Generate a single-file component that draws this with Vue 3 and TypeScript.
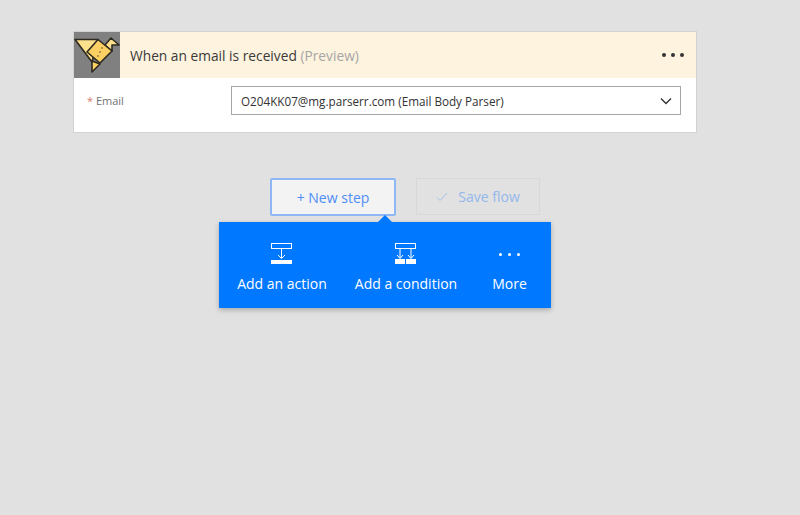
<script setup lang="ts">
const fieldLabel: string = 'Email'
</script>

<template>
  <main class="canvas">
    <section class="card">
      <header class="card-head">
        <div class="logo">
          <svg width="46" height="46" viewBox="0 0 46 46">
            <g stroke="#2e2a22" stroke-width="1.6" stroke-linejoin="round" fill="#fcd062">
              <path d="M1 7.5H24L18 30Z" fill="#fde08c" />
              <path d="M31 13L37 6L45 13H38V19Z" fill="#fde08c" />
              <path d="M18 29L26 32L18 40Z" />
              <path d="M24 7.5L38 19L26 31L13 20Z" />
            </g>
            <circle cx="28" cy="16" r="0.8" fill="#5a4a20" />
            <circle cx="26" cy="20" r="0.8" fill="#5a4a20" />
            <circle cx="24" cy="24" r="0.8" fill="#5a4a20" />
          </svg>
        </div>
        <div class="title">When an email is received <span class="preview">(Preview)</span></div>
        <div class="dots"><i></i><i></i><i></i></div>
      </header>
      <div class="field">
        <label class="label"><span class="req">*</span> {{ fieldLabel }}</label>
        <div class="select">
          <span>O204KK07@mg.parserr.com (Email Body Parser)</span>
          <svg width="12" height="8" viewBox="0 0 12 8"><path d="M1 1.5L6 6.5L11 1.5" fill="none" stroke="#333" stroke-width="1.4" /></svg>
        </div>
      </div>
    </section>

    <div class="actions">
      <button class="new-step">+ New step</button>
      <button class="save">
        <svg width="12" height="10" viewBox="0 0 12 10"><path d="M1 5.5L4 8.5L11 1" fill="none" stroke="#a3c1ec" stroke-width="1" /></svg>
        <span>Save flow</span>
      </button>
    </div>

    <div class="menu">
      <span class="caret"></span>
      <div class="item action">
        <svg width="24" height="22" viewBox="0 0 24 22">
          <g fill="none" stroke="#fff" stroke-width="1">
            <rect x="1.5" y="0.5" width="20" height="5" />
            <path d="M11.5 6V15M8 12L11.5 15.5L15 12" />
          </g>
          <rect x="1" y="17" width="21" height="4" fill="#fff" />
        </svg>
        <span>Add an action</span>
      </div>
      <div class="item condition">
        <svg width="24" height="22" viewBox="0 0 24 22">
          <g fill="none" stroke="#fff" stroke-width="1">
            <rect x="1.5" y="0.5" width="20" height="5" />
            <path d="M6 6V15M3 12L6 15.5L9 12M17 6V15M14 12L17 15.5L20 12" />
          </g>
          <rect x="1" y="16" width="10" height="5" fill="#fff" />
          <rect x="12" y="16" width="10" height="5" fill="#fff" />
        </svg>
        <span>Add a condition</span>
      </div>
      <div class="item more">
        <div class="more-dots"><i></i><i></i><i></i></div>
        <span>More</span>
      </div>
    </div>
  </main>
</template>

<style>
html, body { margin: 0; background: #e1e1e1; }
</style>

<style scoped>
.canvas {
  width: 770px;
  height: 515px;
  box-sizing: border-box;
  padding-top: 31px;
  display: flex;
  flex-direction: column;
  align-items: center;
  font-family: "Open Sans", "Noto Sans", sans-serif;
  background: #e1e1e1;
}
.card {
  width: 624px;
  height: 102px;
  box-sizing: border-box;
  background: #fff;
  border: 1px solid #d2d2d2;
}
.card-head {
  display: flex;
  align-items: center;
  height: 46px;
  background: #fdf3de;
}
.logo {
  width: 46px;
  height: 46px;
  background: #808080;
  flex: none;
}
.logo svg { display: block; }
.title {
  margin-left: 10px;
  font-size: 13.75px;
  color: #3b3a39;
  flex: 1;
  white-space: nowrap;
}
.preview { color: #a6a6a6; }
.dots {
  display: flex;
  gap: 5px;
  margin-right: 12px;
}
.dots i {
  width: 4px;
  height: 4px;
  border-radius: 50%;
  background: #333;
}
.field {
  display: flex;
  align-items: center;
  height: 29px;
  margin-top: 8px;
}
.label {
  width: 157px;
  box-sizing: border-box;
  padding-left: 13px;
  font-size: 11px;
  color: #737373;
}
.req { color: #d9776f; }
.select {
  width: 450px;
  height: 29px;
  box-sizing: border-box;
  border: 1px solid #a6a6a6;
  background: #fff;
  display: flex;
  align-items: center;
  justify-content: space-between;
  padding: 0 8px 0 9px;
  font-size: 11.7px;
  color: #333;
}
.actions {
  display: flex;
  gap: 20px;
  margin-top: 45px;
  margin-left: 40px;
}
button {
  font: inherit;
  box-sizing: border-box;
  width: 126px;
  height: 38px;
  display: flex;
  align-items: center;
  justify-content: center;
}
.new-step {
  background: #f3f3f3;
  border: 2px solid #8db8f5;
  border-radius: 2px;
  color: #4f8ef7;
  font-size: 14px;
}
.save {
  width: 124px;
  height: 37px;
  background: transparent;
  border: 1px solid #d8d8d8;
  color: #94b8ec;
  font-size: 14px;
  gap: 10px;
}
.menu {
  position: relative;
  display: flex;
  width: 332px;
  height: 86px;
  margin-top: 6px;
  background: #0078ff;
  box-shadow: 0 2px 5px rgba(0, 0, 0, 0.25);
  color: #fff;
  font-size: 14px;
}
.caret {
  position: absolute;
  left: 159px;
  top: -7px;
  width: 0;
  height: 0;
  border-left: 7px solid transparent;
  border-right: 7px solid transparent;
  border-bottom: 7px solid #0078ff;
}
.item {
  display: flex;
  flex-direction: column;
  align-items: center;
  padding-top: 21px;
  white-space: nowrap;
}
.item svg { display: block; height: 22px; }
.item span { margin-top: 9px; line-height: 20px; }
.action { width: 124px; margin-left: 1px; }
.condition { width: 124px; }
.more { width: 83px; }
.more-dots {
  display: flex;
  gap: 6px;
  height: 22px;
  align-items: center;
}
.more-dots i {
  width: 3px;
  height: 3px;
  border-radius: 50%;
  background: #fff;
}
</style>
